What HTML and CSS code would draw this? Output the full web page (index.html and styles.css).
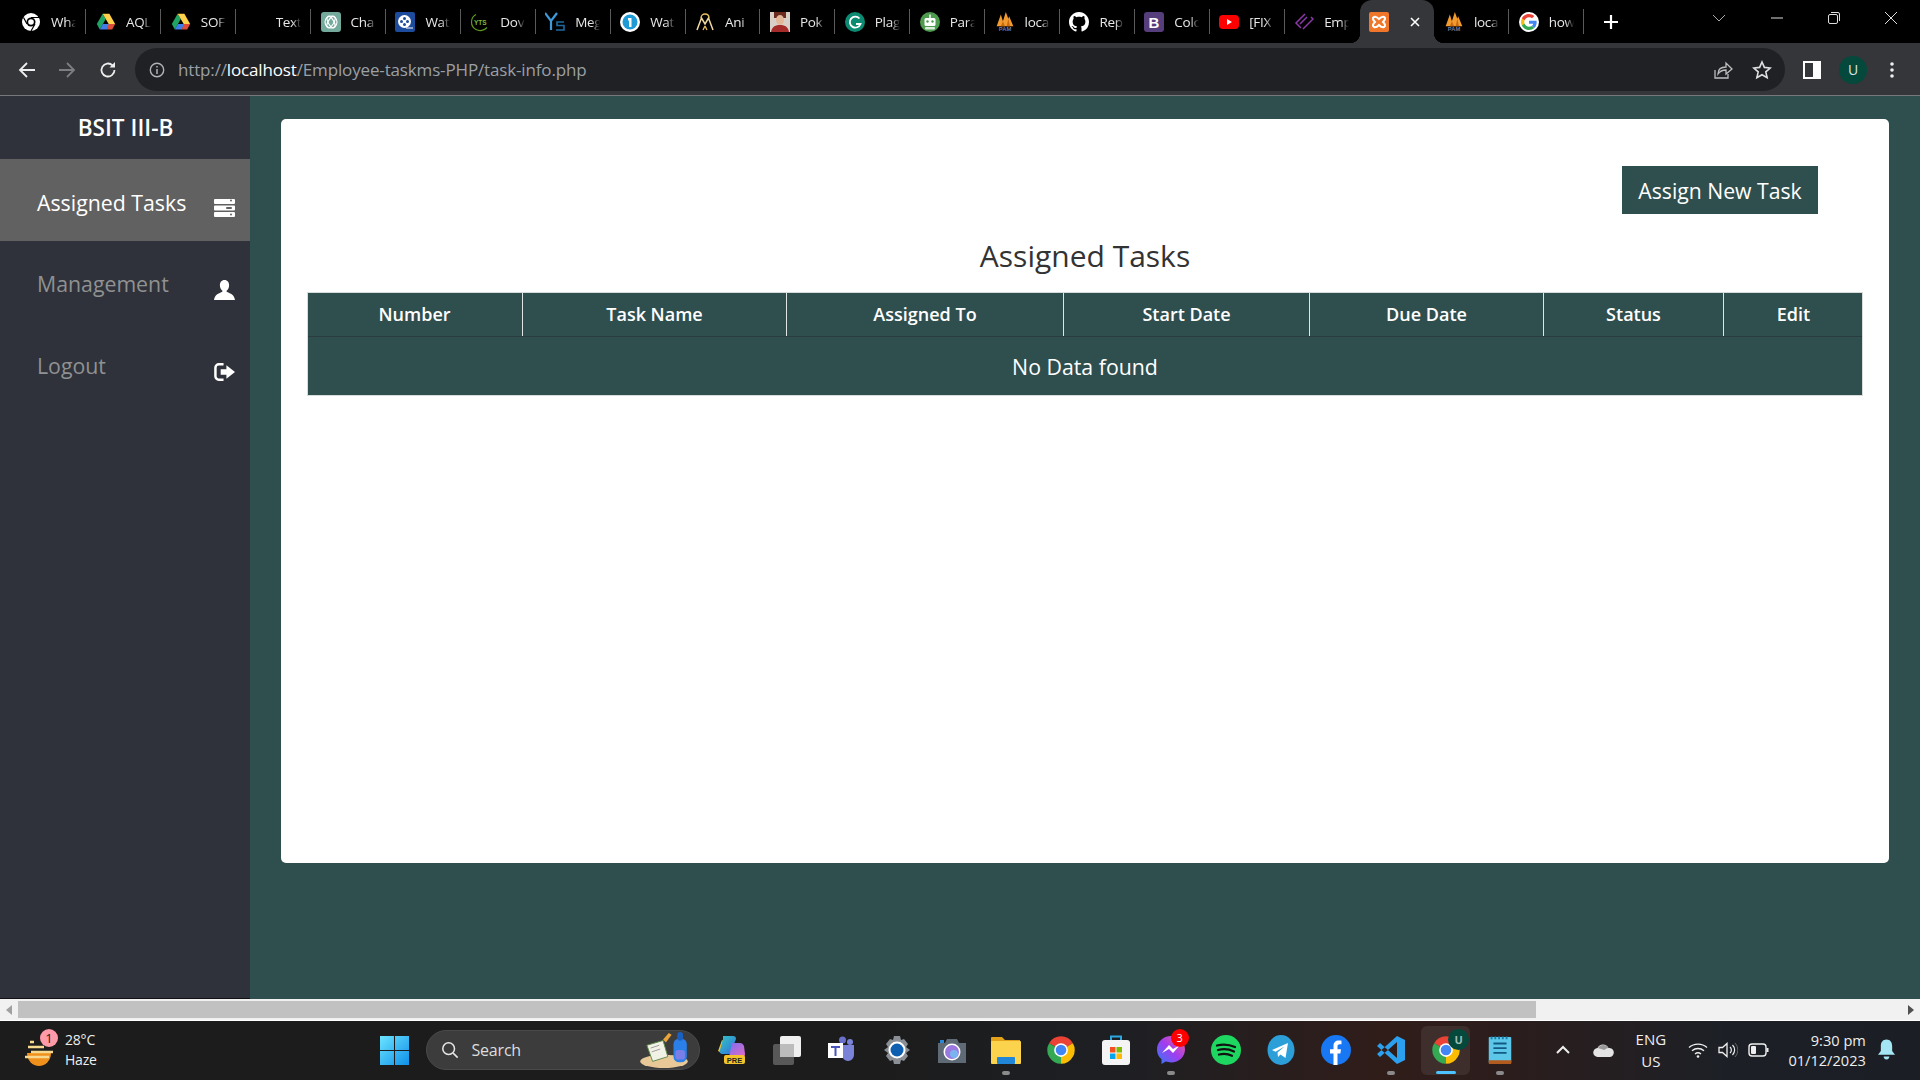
FILE: index.html
```html
<!DOCTYPE html>
<html lang="en">
<head>
<meta charset="utf-8">
<title>Task Info</title>
<link rel="stylesheet" href="styles.css">
</head>
<body>
<svg class="defs" aria-hidden="true">
  <symbol id="drive" viewBox="0 0 24 24"><path fill="#1fa463" d="M8 2 1 14.500 4.600 21 11.700 8.500z"/><path fill="#ffd04b" d="M8 2h8l7 12.500h-7.800z"/><path fill="#3f7ee8" d="M8.200 14.500h8.300L13 21H4.600z"/><path fill="#dd4b39" d="M15.200 14.500H23L19.400 21H13z"/></symbol>
  <symbol id="chromec" viewBox="0 0 48 48"><path fill="#ea4335" d="M24 24 4.950 13A22 22 0 0 1 43.050 13z"/><path fill="#fbbc04" d="M24 24 43.050 13A22 22 0 0 1 24 46z"/><path fill="#34a853" d="M24 24V46A22 22 0 0 1 4.950 13z"/><circle cx="24" cy="24" r="11" fill="#fff"/><circle cx="24" cy="24" r="8.500" fill="#4285f4"/></symbol>
  <symbol id="pam" viewBox="0 0 24 24"><path fill="#f39a2e" d="M2 17 7 3l2.500 8L13 0l3 8 1-3 5 12z"/><path fill="#c56a12" d="M9.500 11 12 17H7zM16 8l2 9h-4z"/><text x="12" y="23" class="pamt">PAM</text></symbol>
</svg>

<header class="tabstrip">
  <div class="tab"><svg class="fav" viewBox="0 0 20 20"><circle cx="10" cy="10" r="9" fill="#fff"/><circle cx="10" cy="10" r="4.500" fill="#000"/><circle cx="10" cy="10" r="2.800" fill="#fff"/><path d="M10 5.500h8M6 12 2.500 5.500M14 12l-4 7" stroke="#000" stroke-width="1.200"/></svg><span class="tab-title">Wha</span></div>
  <div class="tab"><svg class="fav"><use href="#drive"/></svg><span class="tab-title">AQL</span></div>
  <div class="tab"><svg class="fav"><use href="#drive"/></svg><span class="tab-title">SOF</span></div>
  <div class="tab"><span class="fav"></span><span class="tab-title">Text</span></div>
  <div class="tab"><svg class="fav" viewBox="0 0 20 20"><rect width="20" height="20" rx="3" fill="#74aa9c"/><g fill="none" stroke="#fff" stroke-width="1.100"><circle cx="10" cy="10" r="6"/><ellipse cx="10" cy="10" rx="6.500" ry="2.800" transform="rotate(60 10 10)"/><ellipse cx="10" cy="10" rx="6.500" ry="2.800" transform="rotate(-60 10 10)"/></g></svg><span class="tab-title">Cha</span></div>
  <div class="tab"><svg class="fav" viewBox="0 0 20 20"><rect width="20" height="20" rx="2" fill="#1d4c9c"/><circle cx="9.500" cy="9.500" r="6.500" fill="#fff"/><circle cx="9.500" cy="6.500" r="1.500" fill="#1d4c9c"/><circle cx="9.500" cy="12.500" r="1.500" fill="#1d4c9c"/><circle cx="6.500" cy="9.500" r="1.500" fill="#1d4c9c"/><circle cx="12.500" cy="9.500" r="1.500" fill="#1d4c9c"/><path d="M11 16h7" stroke="#fff"/></svg><span class="tab-title">Wat</span></div>
  <div class="tab"><svg class="fav" viewBox="0 0 20 20"><path d="M6 2.500a8.500 8.500 0 0 0 0 15M6 17.500a9 9 0 0 0 11-2" fill="none" stroke="#5c9a1e" stroke-width="1.200"/><text x="4" y="12.500" class="yts">YTS</text></svg><span class="tab-title">Dov</span></div>
  <div class="tab"><svg class="fav" viewBox="0 0 20 20"><path d="M0 1 6 9l6-8M6 9v9" fill="none" stroke="#3e9ad8" stroke-width="2.200"/><path d="M19 10h-7v3.500h7V18h-8" fill="none" stroke="#1e6aa0" stroke-width="1.600"/></svg><span class="tab-title">Meg</span></div>
  <div class="tab"><svg class="fav" viewBox="0 0 20 20"><circle cx="10" cy="10" r="10" fill="#fff"/><circle cx="10" cy="10" r="7.500" fill="#1e9bd7"/><path d="M8 6h3.500v9H9V8.500H8z" fill="#fff"/></svg><span class="tab-title">Wat</span></div>
  <div class="tab"><svg class="fav" viewBox="0 0 20 20"><path d="M2 18 6.500 6 10 12l3.500-6L18 18" fill="none" stroke="#f0d9a0" stroke-width="1.500"/><path d="M6 6c0-3 2-4 4-4s4 1 4 4M10 14l-2 4M10 14l2 4" fill="none" stroke="#e8c060" stroke-width="1.300"/></svg><span class="tab-title">Ani</span></div>
  <div class="tab"><svg class="fav" viewBox="0 0 20 20"><rect width="20" height="20" fill="#d8cfc8"/><path d="M4 0h12v6H4z" fill="#6b2a1e"/><ellipse cx="10" cy="8" rx="4" ry="5" fill="#e2b79a"/><path d="M1 20c1-6 5-7 9-7s8 1 9 7z" fill="#a52a2a"/></svg><span class="tab-title">Pok</span></div>
  <div class="tab"><svg class="fav" viewBox="0 0 20 20"><circle cx="10" cy="10" r="10" fill="#0c8a72"/><path d="M14.500 6.500a5.500 5.500 0 1 0 1 5.500H11" fill="none" stroke="#fff" stroke-width="1.800"/></svg><span class="tab-title">Plag</span></div>
  <div class="tab"><svg class="fav" viewBox="0 0 20 20"><circle cx="10" cy="10" r="10" fill="#4e9a4e"/><rect x="4.500" y="6" width="11" height="8" rx="1.500" fill="#fff"/><rect x="9.300" y="2.500" width="1.400" height="4" fill="#fff"/><circle cx="7.500" cy="9.500" r="1.200" fill="#4e9a4e"/><circle cx="12.500" cy="9.500" r="1.200" fill="#4e9a4e"/><rect x="5" y="15" width="10" height="2.500" rx="1" fill="#d9ecd9"/></svg><span class="tab-title">Para</span></div>
  <div class="tab"><svg class="fav"><use href="#pam"/></svg><span class="tab-title">loca</span></div>
  <div class="tab"><svg class="fav" viewBox="0 0 16 16"><path fill="#fff" d="M8 0C3.580 0 0 3.580 0 8c0 3.540 2.290 6.530 5.470 7.590.4.070.55-.17.55-.38 0-.19-.01-.82-.01-1.490-2.010.37-2.530-.49-2.690-.94-.09-.23-.48-.94-.82-1.130-.28-.15-.68-.52-.01-.53.63-.01 1.080.58 1.230.82.72 1.210 1.870.87 2.330.66.07-.52.28-.87.51-1.070-1.780-.2-3.640-.89-3.640-3.950 0-.87.31-1.590.82-2.150-.08-.2-.36-1.020.08-2.120 0 0 .67-.21 2.200.82.64-.18 1.320-.27 2-.27s1.360.09 2 .27c1.530-1.040 2.200-.82 2.200-.82.44 1.100.16 1.920.08 2.120.51.56.82 1.270.82 2.150 0 3.070-1.870 3.750-3.650 3.950.29.25.54.73.54 1.480 0 1.070-.01 1.930-.01 2.200 0 .21.15.46.55.38A8.013 8.013 0 0 0 16 8c0-4.420-3.580-8-8-8z"/></svg><span class="tab-title">Rep</span></div>
  <div class="tab"><svg class="fav" viewBox="0 0 20 20"><rect width="20" height="20" rx="3" fill="#563d7c"/><text x="10" y="15.500" class="bs">B</text></svg><span class="tab-title">Colo</span></div>
  <div class="tab"><svg class="fav" viewBox="0 0 20 20"><rect y="3" width="20" height="14" rx="4" fill="#f00"/><path d="m8 7 5 3-5 3z" fill="#fff"/></svg><span class="tab-title">[FIX</span></div>
  <div class="tab tab-noline"><svg class="fav" viewBox="0 0 20 20"><path d="M11 2 2 11l5 5M17 5l2 2-10 10M13 5 6 12" fill="none" stroke="#8a3aa8" stroke-width="1.500"/></svg><span class="tab-title">Emp</span></div>
  <div class="tab-active"><svg class="fav" viewBox="0 0 20 20"><rect width="20" height="20" rx="2" fill="#f0762a"/><path d="M5 5c2-1 3 0 5 2 2-2 3-3 5-2s1 3-1 5c2 2 3 4 1 5s-3 0-5-2c-2 2-3 3-5 2s-1-3 1-5C4 8 3 6 5 5z" fill="none" stroke="#fff" stroke-width="2"/></svg><svg class="tab-x" viewBox="0 0 12 12"><path d="m2 2 8 8M10 2l-8 8" stroke="#fff" stroke-width="1.600"/></svg></div>
  <div class="tab"><svg class="fav"><use href="#pam"/></svg><span class="tab-title">loca</span></div>
  <div class="tab"><svg class="fav" viewBox="-6 -6 60 60"><circle cx="24" cy="24" r="30" fill="#fff"/><path fill="#EA4335" d="M24 9.500c3.540 0 6.710 1.220 9.210 3.600l6.850-6.850C35.900 2.380 30.470 0 24 0 14.620 0 6.510 5.380 2.560 13.220l7.980 6.190C12.430 13.720 17.740 9.500 24 9.500z"/><path fill="#4285F4" d="M46.980 24.550c0-1.570-.15-3.090-.38-4.550H24v9.020h12.940c-.58 2.960-2.260 5.480-4.780 7.180l7.730 6c4.510-4.180 7.090-10.360 7.090-17.650z"/><path fill="#FBBC05" d="M10.530 28.590c-.48-1.450-.76-2.990-.76-4.590s.27-3.140.76-4.590l-7.980-6.190C.92 16.460 0 20.120 0 24c0 3.880.92 7.540 2.560 10.780l7.970-6.190z"/><path fill="#34A853" d="M24 48c6.480 0 11.930-2.130 15.890-5.810l-7.730-6c-2.150 1.450-4.920 2.300-8.160 2.300-6.260 0-11.570-4.220-13.470-9.910l-7.980 6.190C6.510 42.620 14.620 48 24 48z"/></svg><span class="tab-title">how</span></div>
  <div class="newtab"><svg viewBox="0 0 16 16"><path d="M8 1v14M1 8h14" stroke="#fff" stroke-width="2.200"/></svg></div>
  <div class="winbtn win-first"><svg viewBox="0 0 14 14"><path d="m1 4 6 6 6-6" fill="none" stroke="#aaa"/></svg></div>
  <div class="winbtn"><svg viewBox="0 0 14 14"><path d="M1 7h12" stroke="#ddd"/></svg></div>
  <div class="winbtn"><svg viewBox="0 0 14 14"><rect x="1.500" y="3.500" width="9" height="9" rx="1.500" fill="none" stroke="#ddd"/><path d="M4 1.500h7a1.500 1.500 0 0 1 1.500 1.500v7" fill="none" stroke="#ddd"/></svg></div>
  <div class="winbtn"><svg viewBox="0 0 14 14"><path d="m1 1 12 12M13 1 1 13" stroke="#ddd"/></svg></div>
</header>

<div class="toolbar">
  <svg class="tool-back" viewBox="0 0 18 18"><path d="M17 9H2M9 2 2 9l7 7" fill="none" stroke="#eee" stroke-width="1.800"/></svg>
  <svg class="tool-fwd" viewBox="0 0 18 18"><path d="M1 9h15M9 2l7 7-7 7" fill="none" stroke="#7d7e80" stroke-width="1.800"/></svg>
  <svg class="tool-reload" viewBox="0 0 18 18"><path d="M15.500 9A6.500 6.500 0 1 1 13.500 4.300" fill="none" stroke="#eee" stroke-width="1.800"/><path d="M16 1v5.500h-5.500z" fill="#eee"/></svg>
  <div class="omnibox">
    <svg class="info" viewBox="0 0 16 16"><circle cx="8" cy="8" r="6.700" fill="none" stroke="#b0b2b5" stroke-width="1.400"/><path d="M8 7v5M8 4v1.600" stroke="#b0b2b5" stroke-width="1.500"/></svg>
    <div class="url">http://<b>localhost</b>/Employee-taskms-PHP/task-info.php</div>
    <svg class="omni-share" viewBox="0 0 20 20"><path d="M2 10v8h13v-4M5 14c0-5 3-7 8-7V3l6 6-6 5v-4c-4 0-6 1-8 4z" fill="none" stroke="#bdbec0" stroke-width="1.300"/></svg>
    <svg class="omni-star" viewBox="0 0 20 20"><path d="m10 2 2.400 5.400 5.800.6-4.400 3.900 1.300 5.800-5.100-3-5.100 3 1.300-5.800L1.800 8l5.800-.6z" fill="none" stroke="#dfe0e2" stroke-width="1.600"/></svg>
  </div>
  <svg class="tool-panel" viewBox="0 0 18 18"><path fill="#fff" fill-rule="evenodd" d="M0 0h18v18H0zm2 2v14h8V2z"/></svg>
  <div class="avatar">U</div>
  <svg class="tool-dots" viewBox="0 0 4 18"><circle cx="2" cy="3" r="1.800" fill="#eee"/><circle cx="2" cy="9" r="1.800" fill="#eee"/><circle cx="2" cy="15" r="1.800" fill="#eee"/></svg>
</div>

<div class="page">
  <aside class="sidebar">
    <h1 class="brand">BSIT III-B</h1>
    <nav>
      <a class="nav-item active"><span>Assigned Tasks</span>
        <svg class="nav-icon" viewBox="0 0 21 18"><path fill="#fff" fill-rule="evenodd" d="M1 0h19a1 1 0 0 1 1 1v3a1 1 0 0 1-1 1H1a1 1 0 0 1-1-1V1a1 1 0 0 1 1-1zm15 1.500a1 1 0 1 0 2 0 1 1 0 0 0-2 0zM1 6.500h19a1 1 0 0 1 1 1v3a1 1 0 0 1-1 1H1a1 1 0 0 1-1-1v-3a1 1 0 0 1 1-1zm11 2.500a1 1 0 0 0 1 1h4a1 1 0 0 0 0-2h-4a1 1 0 0 0-1 1zM1 13h19a1 1 0 0 1 1 1v3a1 1 0 0 1-1 1H1a1 1 0 0 1-1-1v-3a1 1 0 0 1 1-1zm15 2.500a1 1 0 1 0 2 0 1 1 0 0 0-2 0z"/></svg></a>
      <a class="nav-item"><span>Management</span>
        <svg class="nav-icon" viewBox="0 0 21 20"><path fill="#fff" d="M10.500 0c3 0 4.600 2.300 4.600 5.200 0 2.300-1 4.300-2.300 5.400-.4.4-.3 1.200.3 1.500 3.400 1.500 7.200 2.700 7.900 7.900H0c.7-5.200 4.500-6.400 7.900-7.900.6-.3.7-1.100.3-1.500C7 9.500 5.900 7.500 5.900 5.200 5.900 2.300 7.500 0 10.500 0z"/></svg></a>
      <a class="nav-item"><span>Logout</span>
        <svg class="nav-icon" viewBox="0 0 22 20"><path fill="none" stroke="#fff" stroke-width="2.600" d="M10 2H5a3.500 3.500 0 0 0-3.500 3.500v9A3.500 3.500 0 0 0 5 18h5"/><path fill="#fff" d="M7 7h6V3l9 7-9 7v-4H7z"/></svg></a>
    </nav>
  </aside>
  <main class="main">
    <section class="card">
      <div class="card-actions"><button class="assign-btn">Assign New Task</button></div>
      <h2 class="card-title">Assigned Tasks</h2>
      <table class="tasks">
        <colgroup><col class="c1"><col class="c2"><col class="c3"><col class="c4"><col class="c5"><col class="c6"><col class="c7"></colgroup>
        <thead><tr><th>Number</th><th>Task Name</th><th>Assigned To</th><th>Start Date</th><th>Due Date</th><th>Status</th><th>Edit</th></tr></thead>
        <tbody><tr><td colspan="7">No Data found</td></tr></tbody>
      </table>
    </section>
  </main>
</div>

<div class="hscroll">
  <svg class="sc-arrow" viewBox="0 0 8 12"><path d="M7 1v10L1 6z" fill="#a0a0a0"/></svg>
  <div class="sc-track"><div class="sc-thumb"></div></div>
  <svg class="sc-arrow" viewBox="0 0 8 12"><path d="M1 1v10l6-5z" fill="#505050"/></svg>
</div>

<footer class="taskbar">
  <div class="weather">
    <div class="wx-icon">
      <svg viewBox="0 0 30 34"><path d="M3 19a12 13 0 0 0 24 0z" fill="#ef8f1c"/><path d="M6 8h4M4 13h16M7 18h22M1 23h24" stroke="#f6d98e" stroke-width="2.400"/></svg>
      <span class="wx-badge">1</span>
    </div>
    <div class="wx-text"><div>28°C</div><div>Haze</div></div>
  </div>
  <div class="tb-start"><svg viewBox="0 0 28 28"><defs><linearGradient id="wg" x1="0" y1="0" x2="1" y2="1"><stop offset="0" stop-color="#6be4ff"/><stop offset="1" stop-color="#0f8fe8"/></linearGradient></defs><path fill="url(#wg)" d="M0 0h13.500v13.500H0zM14.500 0H28v13.500H14.500zM0 14.500h13.500V28H0zM14.500 14.500H28V28H14.500z"/></svg></div>
  <div class="search">
    <svg class="search-ico" viewBox="0 0 20 20"><circle cx="8.500" cy="8.500" r="6.500" fill="none" stroke="#e8e8e8" stroke-width="1.700"/><path d="m13.500 13.500 5 5" stroke="#e8e8e8" stroke-width="1.700"/></svg>
    <span>Search</span>
    <svg class="search-art" viewBox="0 0 50 40"><ellipse cx="25" cy="32" rx="25" ry="7" fill="#e8c897"/><path d="M7 15l17-5 5 17-16 5z" fill="#f1f1e6" stroke="#5e8a4a"/><path d="M11 18l9-3M12 22l9-3" stroke="#999"/><path d="m24 9 6-7 3 2-6 8z" fill="#e8a33a"/><rect x="35" y="8" width="14" height="25" rx="6" fill="#2a7fe8"/><rect x="39" y="1" width="6" height="9" rx="3" fill="#1b5fc0"/><rect x="37" y="20" width="10" height="10" rx="3" fill="#7a7fe8"/></svg>
  </div>
  <div class="tb-apps">
    <div class="slot"><svg viewBox="0 0 30 30"><defs><linearGradient id="cp1" x1="0" y1="0" x2="1" y2="1"><stop offset="0" stop-color="#35c6c0"/><stop offset="1" stop-color="#2f6fe0"/></linearGradient><linearGradient id="cp2" x1="0" y1="0" x2="1" y2="1"><stop offset="0" stop-color="#7a6ff0"/><stop offset="1" stop-color="#e46ac8"/></linearGradient></defs><path fill="#e8c23a" d="M1 16 5 5l4 3-3 11z"/><path fill="url(#cp1)" d="M6 1h10c2 0 3 1 3 3l-6 15H6c-3 0-4-2-3-4l3-11z"/><path fill="url(#cp2)" d="M15 8h8c2 0 3 1 4 3l1 8c0 2-1 3-3 3H12z"/><rect x="7" y="20" width="21" height="9" rx="2" fill="#f4c22b"/><text x="17.500" y="27.500" class="pre">PRE</text></svg></div>
    <div class="slot"><svg viewBox="0 0 30 30"><rect x="1" y="9" width="21" height="21" rx="2" fill="#585858"/><rect x="8" y="1" width="21" height="21" rx="2" fill="#efefef"/><rect x="8" y="9" width="14" height="13" fill="#bcbcbc"/></svg></div>
    <div class="slot"><svg viewBox="0 0 30 30"><circle cx="23" cy="7" r="3" fill="#7b83d9"/><circle cx="15.500" cy="5" r="3.500" fill="#6870cc"/><path d="M13 10h14v10a6 6 0 0 1-12 0z" fill="#7b83d9"/><rect x="1" y="8" width="15" height="15" fill="#fff"/><path d="M4 11h9v2H9.500v8h-2v-8H4z" fill="#4b53bc"/></svg></div>
    <div class="slot"><svg viewBox="0 0 30 30"><path fill="#8a8f96" d="M12 1h6l1 4 3-1 4 5-2 3 4 3-4 3 2 3-4 5-3-1-1 4h-6l-1-4-3 1-4-5 2-3-4-3 4-3-2-3 4-5 3 1z"/><circle cx="15" cy="15" r="8.500" fill="#fff"/><circle cx="15" cy="15" r="6.500" fill="#0f5fb0"/></svg></div>
    <div class="slot"><svg viewBox="0 0 30 30"><path fill="#5e6a75" d="M1 8h7l2-4h10l2 4h7v20H1z"/><rect x="3" y="5" width="4" height="3" fill="#2b88d8"/><circle cx="15" cy="17" r="8.500" fill="#fff"/><circle cx="15" cy="17" r="7" fill="#9a78e0"/><circle cx="17" cy="19" r="4" fill="#7ab4f0"/></svg></div>
    <div class="slot dot"><svg viewBox="0 0 30 30"><path fill="#e3a21a" d="M0 3a1 1 0 0 1 1-1h10l3 3h15v4H0z"/><rect y="6" width="30" height="23" rx="1" fill="#fcd34d"/><rect x="6" y="22" width="18" height="7" rx="1" fill="#1f86d8"/></svg></div>
    <div class="slot"><svg viewBox="0 0 48 48"><use href="#chromec"/></svg></div>
    <div class="slot"><svg viewBox="0 0 30 30"><path d="M10 6V1.500h10V6" fill="none" stroke="#2ba8e0" stroke-width="2"/><rect x="1" y="5" width="28" height="25" rx="3" fill="#f4f4f4"/><rect x="9" y="12" width="5.500" height="5.500" fill="#f25022"/><rect x="15.500" y="12" width="5.500" height="5.500" fill="#7fba00"/><rect x="9" y="18.500" width="5.500" height="5.500" fill="#00a4ef"/><rect x="15.500" y="18.500" width="5.500" height="5.500" fill="#ffb900"/></svg></div>
    <div class="slot dot"><svg viewBox="0 0 30 30"><defs><linearGradient id="ms" x1="0" y1="1" x2="1" y2="0"><stop offset="0" stop-color="#2f7cf6"/><stop offset=".5" stop-color="#a13df0"/><stop offset="1" stop-color="#f05f8a"/></linearGradient></defs><path fill="url(#ms)" d="M15 1C7 1 1 7 1 14.500c0 4 1.700 7.400 4.500 9.800V29l4.300-2.400c1.600.5 3.400.8 5.200.8 8 0 14-6 14-13S23 1 15 1z"/><path fill="#fff" d="m6 18 7-8 4 4 7-4-7 8-4-4z"/></svg><span class="app-badge">3</span></div>
    <div class="slot"><svg viewBox="0 0 30 30"><circle cx="15" cy="15" r="15" fill="#1ed760"/><path d="M6 10.500c6-1.600 12-1.200 18 1.500M7 15c5-1.300 11-1 16 1.500M8 19.500c4.500-1 9-.7 13 1.200" fill="none" stroke="#111" stroke-width="2.300" stroke-linecap="round"/></svg></div>
    <div class="slot"><svg viewBox="0 0 30 30"><ellipse cx="15" cy="15" rx="13.500" ry="15" fill="#2c9fd9"/><path d="m6 15 16-7-2.500 15-5-3.500-2.500 2.500-.5-4.500 7-6-9 5.200z" fill="#fff"/></svg></div>
    <div class="slot"><svg viewBox="0 0 30 30"><ellipse cx="15" cy="15" rx="15" ry="15" fill="#1877f2"/><path d="M12.500 30V18.500H9v-4.200h3.500V11c0-3.600 2-5.500 5.300-5.500 1.200 0 2.700.2 2.700.2v3.600h-1.700c-1.800 0-2.300 1-2.300 2.200v2.800H20l-.6 4.200h-2.900V30z" fill="#fff"/></svg></div>
    <div class="slot dot"><svg viewBox="0 0 30 30"><path fill="#2ba0ee" d="M21 1v28l8-4V5zM1 11l3-3 17 15v6zM1 19l3 3L21 7V1z"/></svg></div>
    <div class="slot slot-on"><svg viewBox="0 0 48 48"><use href="#chromec"/></svg><span class="app-user">U</span></div>
    <div class="slot dot"><svg viewBox="0 0 24 32"><rect y="2" width="24" height="28" rx="1" fill="#5cc7e8"/><path d="M0 27h24v3a1 1 0 0 1-1 1H1a1 1 0 0 1-1-1z" fill="#b35a1f"/><path d="M5 9h14M5 14h14M5 19h14" stroke="#125a82" stroke-width="2"/><path d="M2 3h20" stroke="#1a7ea6" stroke-width="3" stroke-dasharray="2 2"/></svg></div>
  </div>
  <div class="tray">
    <svg class="tr-caret" viewBox="0 0 16 10"><path d="m2 8 6-6 6 6" fill="none" stroke="#eee" stroke-width="2"/></svg>
    <svg class="tr-cloud" viewBox="0 0 22 14"><path fill="#e4e4e4" d="M5 14a4.500 4.500 0 0 1-.5-9A6 6 0 0 1 15.500 5a4.500 4.500 0 0 1 1.500 9z"/><path fill="#9a9a9a" d="M5 5a6 6 0 0 1 10.500 0c-2 0-3 1-4 2-2-1-5-1-6.500-2z"/></svg>
    <div class="tr-lang"><div>ENG</div><div>US</div></div>
    <svg class="tr-wifi" viewBox="0 0 20 16"><path d="M1 5.500c5-4.500 13-4.500 18 0M4 8.800c3.500-3 8.500-3 12 0M7 12c1.800-1.400 4.200-1.400 6 0" fill="none" stroke="#eee" stroke-width="1.400"/><circle cx="10" cy="14.500" r="1.300" fill="#eee"/></svg>
    <svg class="tr-vol" viewBox="0 0 20 16"><path d="M1 5.500h3.500L9 1.500v13l-4.500-4H1z" fill="none" stroke="#eee" stroke-width="1.300"/><path d="M12 5a4 4 0 0 1 0 6M14.500 3a7 7 0 0 1 0 10" fill="none" stroke="#eee" stroke-width="1.200"/><path d="M17 1a10 10 0 0 1 0 14" fill="none" stroke="#666"/></svg>
    <svg class="tr-batt" viewBox="0 0 22 14"><rect x="1" y="1" width="17" height="12" rx="3" fill="none" stroke="#eee" stroke-width="1.400"/><rect x="3" y="3" width="5" height="8" rx="1" fill="#eee"/><path d="M19.500 5v4" stroke="#eee" stroke-width="2"/></svg>
    <div class="tr-clock"><div>9:30 pm</div><div>01/12/2023</div></div>
    <svg class="tr-bell" viewBox="0 0 18 22"><path fill="#a5e6f5" d="M9 0c4 0 6 3 6 7v5l3 4H0l3-4V7c0-4 2-7 6-7z"/><path fill="#a5e6f5" d="M6 18h6a3 3 0 0 1-6 0z"/></svg>
  </div>
</footer>
</body>
</html>
```

FILE: styles.css
```css
* { box-sizing: border-box; }
html, body { height: 100%; margin: 0; }
body {
  display: flex;
  flex-direction: column;
  overflow: hidden;
  font-family: "Open Sans", "Noto Sans", sans-serif;
  background: #2f4f4f;
}
.defs { display: none; }

/* tab strip */
.tabstrip {
  height: 43px;
  flex: none;
  background: #000;
  display: flex;
  align-items: center;
  padding-left: 11.5px;
}
.tab {
  width: 74.9px;
  height: 25px;
  flex: none;
  display: flex;
  align-items: center;
  padding-left: 9.5px;
  gap: 10px;
  border-right: 1px solid #5a5a5a;
}
.tab-noline { border-right-color: transparent; }
.fav { width: 20px; height: 20px; flex: none; display: block; }
.tab-title {
  width: 28px;
  white-space: nowrap;
  color: #e8e8e8;
  font-size: 13.5px;
  letter-spacing: -0.3px;
  -webkit-mask-image: linear-gradient(90deg, #000 58%, transparent 90%);
  mask-image: linear-gradient(90deg, #000 58%, transparent 90%);
}
.tab-active {
  width: 74.9px;
  height: 43px;
  flex: none;
  align-self: flex-end;
  display: flex;
  align-items: center;
  padding-left: 9.5px;
  gap: 20px;
  background: #35363a;
  border-radius: 12px 12px 0 0;
  position: relative;
}
.tab-active::before, .tab-active::after {
  content: "";
  position: absolute;
  bottom: 0;
  width: 10px;
  height: 10px;
}
.tab-active::before { left: -10px; background: radial-gradient(circle at 0 0, transparent 10px, #35363a 10.5px); }
.tab-active::after { right: -10px; background: radial-gradient(circle at 100% 0, transparent 10px, #35363a 10.5px); }
.tab-x { width: 12px; height: 12px; }
.newtab { width: 54px; flex: none; display: flex; justify-content: center; }
.newtab svg { width: 16px; height: 16px; }
.winbtn { width: 57.3px; flex: none; display: flex; justify-content: center; align-self: flex-start; padding-top: 11px; }
.winbtn svg { width: 14px; height: 14px; }
.win-first { margin-left: auto; }
.yts { font: 700 6.5px "Liberation Sans", sans-serif; fill: #7fb83a; }
.bs { font: 700 15px "Liberation Sans", sans-serif; fill: #fff; text-anchor: middle; }
.pamt { font: 700 7px "Liberation Sans", sans-serif; fill: #6a78a8; text-anchor: middle; }

/* toolbar */
.toolbar {
  height: 53px;
  flex: none;
  background: #35363a;
  border-bottom: 1px solid #77787a;
  display: flex;
  align-items: center;
  padding-top: 1px;
}
.toolbar svg { flex: none; display: block; }
.tool-back { width: 18px; height: 18px; margin-left: 18px; }
.tool-fwd { width: 18px; height: 18px; margin-left: 22px; }
.tool-reload { width: 18px; height: 18px; margin-left: 23px; }
.omnibox {
  width: 1650px;
  height: 43px;
  margin-left: 18px;
  background: #202124;
  border-radius: 22px;
  display: flex;
  align-items: center;
  padding-left: 14px;
}
.info { width: 16px; height: 16px; }
.url { margin-left: 13px; font-size: 17px; letter-spacing: -0.15px; color: #9aa0a6; white-space: nowrap; }
.url b { font-weight: 400; color: #fff; }
.omni-share { width: 20px; height: 20px; margin-left: auto; }
.omni-star { width: 20px; height: 20px; margin-left: 19px; margin-right: 13px; }
.tool-panel { width: 18px; height: 18px; margin-left: 18px; }
.avatar {
  width: 28px;
  height: 28px;
  margin-left: 18px;
  border-radius: 50%;
  background: #04493c;
  color: #d8e8e4;
  font-size: 14px;
  display: flex;
  align-items: center;
  justify-content: center;
}
.tool-dots { width: 4px; height: 18px; margin-left: 23px; }

/* page */
.page { flex: 1; min-height: 0; display: flex; }
.sidebar {
  width: 250px;
  flex: none;
  background: #2f323a;
  border-bottom: 1px solid #111;
}
.brand {
  height: 63px;
  margin: 0;
  color: #fff;
  font-size: 22.6px;
  font-weight: 600;
  text-align: center;
  line-height: 64px;
  padding-left: 1px;
}
.nav-item {
  height: 82px;
  display: flex;
  align-items: center;
  justify-content: space-between;
  padding: 0 15px 0 37px;
  color: #8f9192;
  font-size: 21.3px;
}
.nav-item span { margin-top: 3px; }
.nav-item.active { background: #616161; color: #fff; }
.nav-item.active span { margin-top: 5px; }
.nav-icon { width: 21px; height: 20px; margin-top: 15px; }
.main { flex: 1; min-width: 0; padding: 23px 31px 0; }
.card {
  height: 744px;
  background: #fff;
  border-radius: 5px;
  padding: 47px 26px 0;
}
.card-actions { display: flex; justify-content: flex-end; padding-right: 45px; }
.assign-btn {
  width: 196px;
  height: 48px;
  border: 0;
  background: #2f4f4f;
  color: #fff;
  font: 400 21.2px "Open Sans", sans-serif;
  padding: 0;
}
.card-title {
  margin: 23px 0 17px;
  color: #333;
  font-size: 30px;
  font-weight: 400;
  line-height: 38px;
  text-align: center;
}
.tasks {
  width: 100%;
  table-layout: fixed;
  border-collapse: collapse;
  background: #2f4f4f;
  color: #fff;
  outline: 1px solid #d8dcdc;
  outline-offset: -1px;
}
.c1 { width: 215.5px; }
.c2 { width: 264px; }
.c3 { width: 277px; }
.c4 { width: 246px; }
.c5 { width: 234px; }
.c6 { width: 180px; }
.tasks th {
  height: 44px;
  padding: 0;
  font-size: 18px;
  font-weight: 600;
  border-left: 1px solid #dfe5e5;
  border-bottom: 1px solid #2a3c40;
}
.tasks th:first-child { border-left: 0; }
.tasks td { height: 60px; padding: 0; text-align: center; font-size: 21.3px; }

/* horizontal scrollbar */
.hscroll {
  height: 22px;
  flex: none;
  background: #f1f1f1;
  display: flex;
  align-items: center;
  border-bottom: 1px solid #fff;
}
.sc-arrow { width: 8px; height: 12px; flex: none; margin: 0 5px; }
.sc-track { flex: 1; height: 17px; }
.sc-thumb { width: 1518px; height: 100%; background: #c1c1c1; }

/* taskbar */
.taskbar {
  height: 59px;
  flex: none;
  display: flex;
  align-items: center;
  color: #eee;
  padding-bottom: 1px;
  background: linear-gradient(90deg, #1c1c1c 0%, #1c1c1c 45%, #1d1f23 58%, #301d1a 72%, #2c1d1c 78%, #1c2026 90%, #1b1e24 100%);
}
.weather { width: 379.5px; flex: none; display: flex; align-items: center; padding-left: 24px; gap: 14px; }
.wx-icon { width: 27px; height: 36px; position: relative; flex: none; }
.wx-icon svg { width: 30px; height: 34px; display: block; margin-top: 2px; }
.wx-badge {
  position: absolute;
  left: 16px;
  top: -3px;
  width: 18px;
  height: 18px;
  border-radius: 50%;
  background: #ff9aa8;
  color: #222;
  font-size: 13px;
  line-height: 18px;
  text-align: center;
}
.wx-text { font-size: 14px; line-height: 20px; letter-spacing: -0.2px; }
.tb-start { width: 29px; flex: none; }
.tb-start svg { display: block; width: 29px; height: 29px; }
.search {
  width: 274px;
  height: 40px;
  flex: none;
  margin-left: 17px;
  border-radius: 20px;
  background: #3c3c3c;
  border: 1px solid #4a4a4a;
  display: flex;
  align-items: center;
  padding-left: 14px;
  font-size: 16px;
  color: #ddd;
  letter-spacing: -0.2px;
}
.search-ico { width: 18px; height: 18px; margin-right: 13px; flex: none; }
.search-art { width: 58px; height: 38px; margin-left: auto; margin-right: 6px; flex: none; }
.tb-apps { display: flex; margin-left: 5px; }
.slot {
  width: 54.9px;
  height: 49px;
  flex: none;
  display: flex;
  align-items: center;
  justify-content: center;
  position: relative;
}
.slot svg { width: 30px; height: 30px; display: block; }
.slot.dot::after {
  content: "";
  position: absolute;
  left: calc(50% - 4px);
  bottom: 0;
  width: 8px;
  height: 4px;
  border-radius: 2px;
  background: #8a8a8a;
}
.slot-on::before {
  content: "";
  position: absolute;
  inset: 0 3px;
  border-radius: 6px;
  background: rgba(255, 255, 255, 0.08);
}
.slot-on::after {
  content: "";
  position: absolute;
  left: calc(50% - 10px);
  bottom: 1px;
  width: 20px;
  height: 3px;
  border-radius: 2px;
  background: #4cc2ff;
}
.slot-on svg { position: relative; }
.app-badge, .app-user {
  position: absolute;
  border-radius: 50%;
  font-size: 11px;
  text-align: center;
}
.app-badge { left: 27px; top: 3px; width: 18px; height: 18px; line-height: 18px; background: #f00; color: #fff; }
.app-user { left: 30px; top: 3px; width: 21px; height: 21px; line-height: 21px; background: #04493c; color: #9dbdb5; font-weight: 700; }
.pre { font: 700 7.5px "Liberation Sans", sans-serif; fill: #222; text-anchor: middle; }
.tray { display: flex; align-items: center; flex: 1; margin-left: 27px; }
.tr-caret { width: 16px; height: 10px; margin-left: 0; }
.tr-cloud { width: 22px; height: 14px; margin-left: 22px; }
.tr-lang { margin-left: 20px; width: 32px; font-size: 15px; line-height: 22px; text-align: center; white-space: nowrap; }
.tr-wifi { width: 20px; height: 16px; margin-left: 21px; }
.tr-vol { width: 20px; height: 16px; margin-left: 10px; }
.tr-batt { width: 22px; height: 14px; margin-left: 10px; }
.tr-clock { margin-left: 2px; width: 94px; font-size: 14.6px; line-height: 20px; text-align: right; white-space: nowrap; }
.tr-bell { width: 17px; height: 22px; margin-left: 12px; }
```
